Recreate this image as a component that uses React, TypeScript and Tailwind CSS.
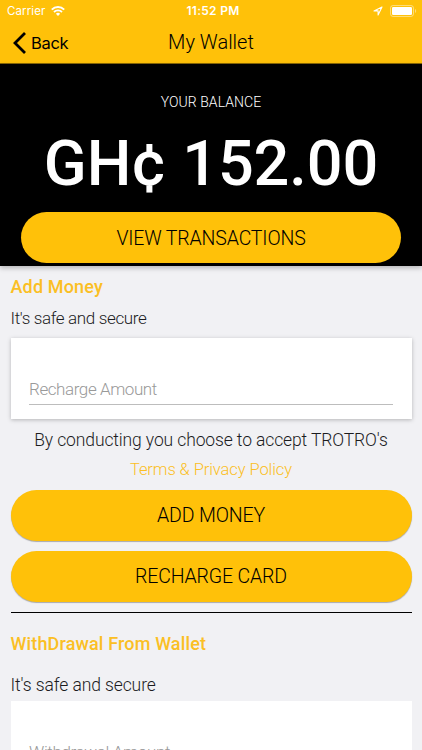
import type { ReactNode } from "react";

function StatusBar() {
    return (
        <div className="relative flex h-[22px] items-center justify-between pl-[7px] pr-[5px] font-['Inter',sans-serif] text-white">
            <div className="flex items-center gap-[6px]">
                <span className="text-[11.5px] leading-[22px] tracking-[0.1px]">Carrier</span>
                <svg width="14" height="10" viewBox="0 0 14 10" fill="none" stroke="currentColor">
                    <path d="M0.8 3.6a8.8 8.8 0 0 1 12.4 0" strokeWidth="2" />
                    <path d="M3 6a5.7 5.7 0 0 1 8 0" strokeWidth="1.8" />
                    <path d="M7 9.9 4.9 7.8a3 3 0 0 1 4.2 0z" fill="currentColor" stroke="none" />
                </svg>
            </div>

            <span className="absolute left-1/2 top-0 ml-[2px] -translate-x-1/2 whitespace-nowrap text-[12px] font-semibold leading-[22px] tracking-[0.3px]">
                11:52 PM
            </span>

            <div className="flex items-center gap-[7px]">
                <svg width="10" height="10" viewBox="0 0 10 10" fill="none" stroke="currentColor" strokeLinejoin="round">
                    <path d="M9 1 1 4.9h4.1V9z" strokeWidth="1.1" />
                </svg>
                <svg width="27" height="12" viewBox="0 0 27 12" fill="none">
                    <rect x="0.5" y="0.5" width="23" height="11" rx="2.6" stroke="#fff" strokeOpacity="0.45" />
                    <rect x="2" y="2" width="20" height="8" rx="1.2" fill="#fff" />
                    <path d="M25 4v4c1.6-.6 1.6-3.4 0-4z" fill="#fff" fillOpacity="0.45" />
                </svg>
            </div>
        </div>
    );
}

function NavBar() {
    return (
        <div className="relative flex h-[41px] items-center pl-[13px] text-black">
            <svg className="mt-[1px]" width="13" height="22" viewBox="0 0 13 22" fill="none" stroke="currentColor" strokeWidth="2.8">
                <path d="M12 1 2 11l10 10" />
            </svg>
            <span className="ml-[5px] mt-px font-['Inter',sans-serif] text-[16.5px] leading-[24px] tracking-[-0.3px]">
                Back
            </span>
            <h1 className="absolute left-1/2 top-[7px] -translate-x-1/2 whitespace-nowrap text-[20px] font-light leading-[26px]">
                My Wallet
            </h1>
        </div>
    );
}

function PillButton({ children }: { children: ReactNode }) {
    return (
        <button className="flex h-[51px] w-full items-center justify-center rounded-full bg-[#ffc109] text-[19.5px] font-light tracking-[-0.15px] text-black shadow-[0_1px_1px_rgba(0,0,0,0.3)]">
            {children}
        </button>
    );
}

export default function App() {
    return (
        <div className="h-[750px] w-[422px] overflow-hidden bg-[#f1f1f4] font-['Roboto',sans-serif] text-[#1c1c1e]">
            <header className="h-16 border-b border-[#8a6805] bg-[#ffc109]">
                <StatusBar />
                <NavBar />
            </header>

            <section className="h-[202px] bg-black px-[21px] pt-[28px] text-center text-white shadow-[0_2px_5px_rgba(0,0,0,0.25)]">
                <p className="text-[14px] font-light leading-[20px] tracking-[0.05px]">YOUR BALANCE</p>
                <p className="mt-[15px] whitespace-nowrap text-[63px] font-medium leading-[74px] tracking-[-0.1px]">
                    GH¢ 152.00
                </p>
                <div className="mt-[11px]">
                    <PillButton>
                        <span className="pt-[2px]">VIEW TRANSACTIONS</span>
                    </PillButton>
                </div>
            </section>

            <main className="px-[10.5px]">
                <h2 className="pt-[9px] text-[18px] font-medium leading-[24px] tracking-[0.15px] text-[#fbbf24]">
                    Add Money
                </h2>
                <p className="mt-[7px] text-[17px] font-light leading-[24px] tracking-[-0.35px]">
                    It's safe and secure
                </p>

                <div className="mt-[8px] h-[81px] bg-white px-[18.5px] pt-[39px] shadow-[0_1px_4px_rgba(0,0,0,0.25)]">
                    <div className="h-[28px] border-b border-[#bdbdbd] text-[17px] font-light leading-[24px] tracking-[-0.42px] text-[#999999]">
                        Recharge Amount
                    </div>
                </div>

                <p className="mt-[9px] text-center text-[17.5px] font-light leading-[24px] tracking-[-0.12px]">
                    By conducting you choose to accept TROTRO's
                </p>
                <p className="mt-[6px] text-center text-[16.5px] font-light leading-[24px] tracking-[-0.08px] text-[#fbbf24]">
                    Terms &amp; Privacy Policy
                </p>

                <div className="mt-[8px] flex flex-col gap-[10px]">
                    <PillButton>ADD MONEY</PillButton>
                    <PillButton>RECHARGE CARD</PillButton>
                </div>

                <hr className="mt-[10px] border-t border-black" />

                <h2 className="mt-[19px] text-[18px] font-medium leading-[24px] tracking-[0.15px] text-[#fbbf24]">
                    WithDrawal From Wallet
                </h2>
                <p className="mt-[17px] text-[17.5px] font-light leading-[24px] tracking-[-0.1px]">
                    It's safe and secure
                </p>

                <div className="mt-[4px] h-[81px] bg-white px-[18.5px] pt-[39px]">
                    <div className="text-[17px] font-light leading-[24px] tracking-[-0.36px] text-[#999999]">
                        Withdrawal Amount
                    </div>
                </div>
            </main>
        </div>
    );
}
